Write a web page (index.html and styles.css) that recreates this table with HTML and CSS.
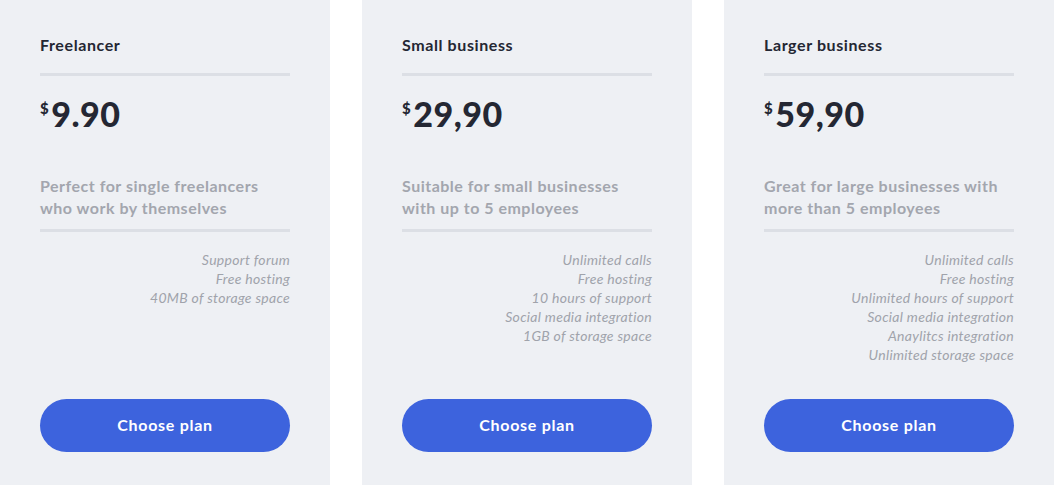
FILE: index.html
```html
<!DOCTYPE html>
<html>
<head>
<meta charset="utf-8">
<link rel="stylesheet" href="styles.css">
</head>
<body>
<div class="plans">
  <div class="card">
    <h2 class="name">Freelancer</h2>
    <div class="price"><span class="cur">$</span>9.90</div>
    <p class="desc">Perfect for single freelancers who work by themselves</p>
    <ul class="features">
      <li>Support forum</li>
      <li>Free hosting</li>
      <li>40MB of storage space</li>
    </ul>
    <button class="btn">Choose plan</button>
  </div>
  <div class="card">
    <h2 class="name">Small business</h2>
    <div class="price"><span class="cur">$</span>29,90</div>
    <p class="desc">Suitable for small businesses with up to 5 employees</p>
    <ul class="features">
      <li>Unlimited calls</li>
      <li>Free hosting</li>
      <li>10 hours of support</li>
      <li>Social media integration</li>
      <li>1GB of storage space</li>
    </ul>
    <button class="btn">Choose plan</button>
  </div>
  <div class="card">
    <h2 class="name">Larger business</h2>
    <div class="price"><span class="cur">$</span>59,90</div>
    <p class="desc">Great for large businesses with more than 5 employees</p>
    <ul class="features">
      <li>Unlimited calls</li>
      <li>Free hosting</li>
      <li>Unlimited hours of support</li>
      <li>Social media integration</li>
      <li>Anaylitcs integration</li>
      <li>Unlimited storage space</li>
    </ul>
    <button class="btn">Choose plan</button>
  </div>
</div>
</body>
</html>
```
FILE: styles.css
```css
html, body {
  margin: 0;
  padding: 0;
  background: #ffffff;
  font-family: Lato, "Open Sans", sans-serif;
}
.plans {
  display: flex;
  gap: 32px;
  height: 485px;
}
.card {
  width: 330px;
  flex: 0 0 330px;
  box-sizing: border-box;
  background: #eef0f4;
  padding: 35px 40px 33px;
  display: flex;
  flex-direction: column;
}
.name {
  margin: 0;
  font-size: 16px;
  line-height: 20px;
  font-weight: 700;
  letter-spacing: 0.6px;
  color: #242733;
  padding-bottom: 18px;
  border-bottom: 3px solid #dcdfe5;
}
.price {
  margin-top: 18px;
  font-size: 34px;
  line-height: 40px;
  font-weight: 900;
  color: #242733;
  letter-spacing: 0.5px;
}
.cur {
  font-size: 15px;
  vertical-align: top;
  position: relative;
  top: -6px;
  margin-right: 2px;
}
.desc {
  margin: 41px 0 0;
  font-size: 16px;
  line-height: 22px;
  font-weight: 700;
  letter-spacing: 0.5px;
  color: #a3a6ae;
  padding-bottom: 10px;
  border-bottom: 3px solid #dcdfe5;
}
.features {
  list-style: none;
  margin: 18px 0 0;
  padding: 0;
  text-align: right;
  font-size: 14px;
  line-height: 19px;
  font-style: italic;
  font-weight: 400;
  letter-spacing: 0.3px;
  color: #a0a3ab;
}
.btn {
  margin-top: auto;
  height: 53px;
  width: 100%;
  border: none;
  border-radius: 27px;
  background: #3d63dd;
  color: #ffffff;
  font-family: inherit;
  font-size: 16px;
  letter-spacing: 0.7px;
  font-weight: 700;
  padding: 0 0 2px;
  cursor: pointer;
}
```
